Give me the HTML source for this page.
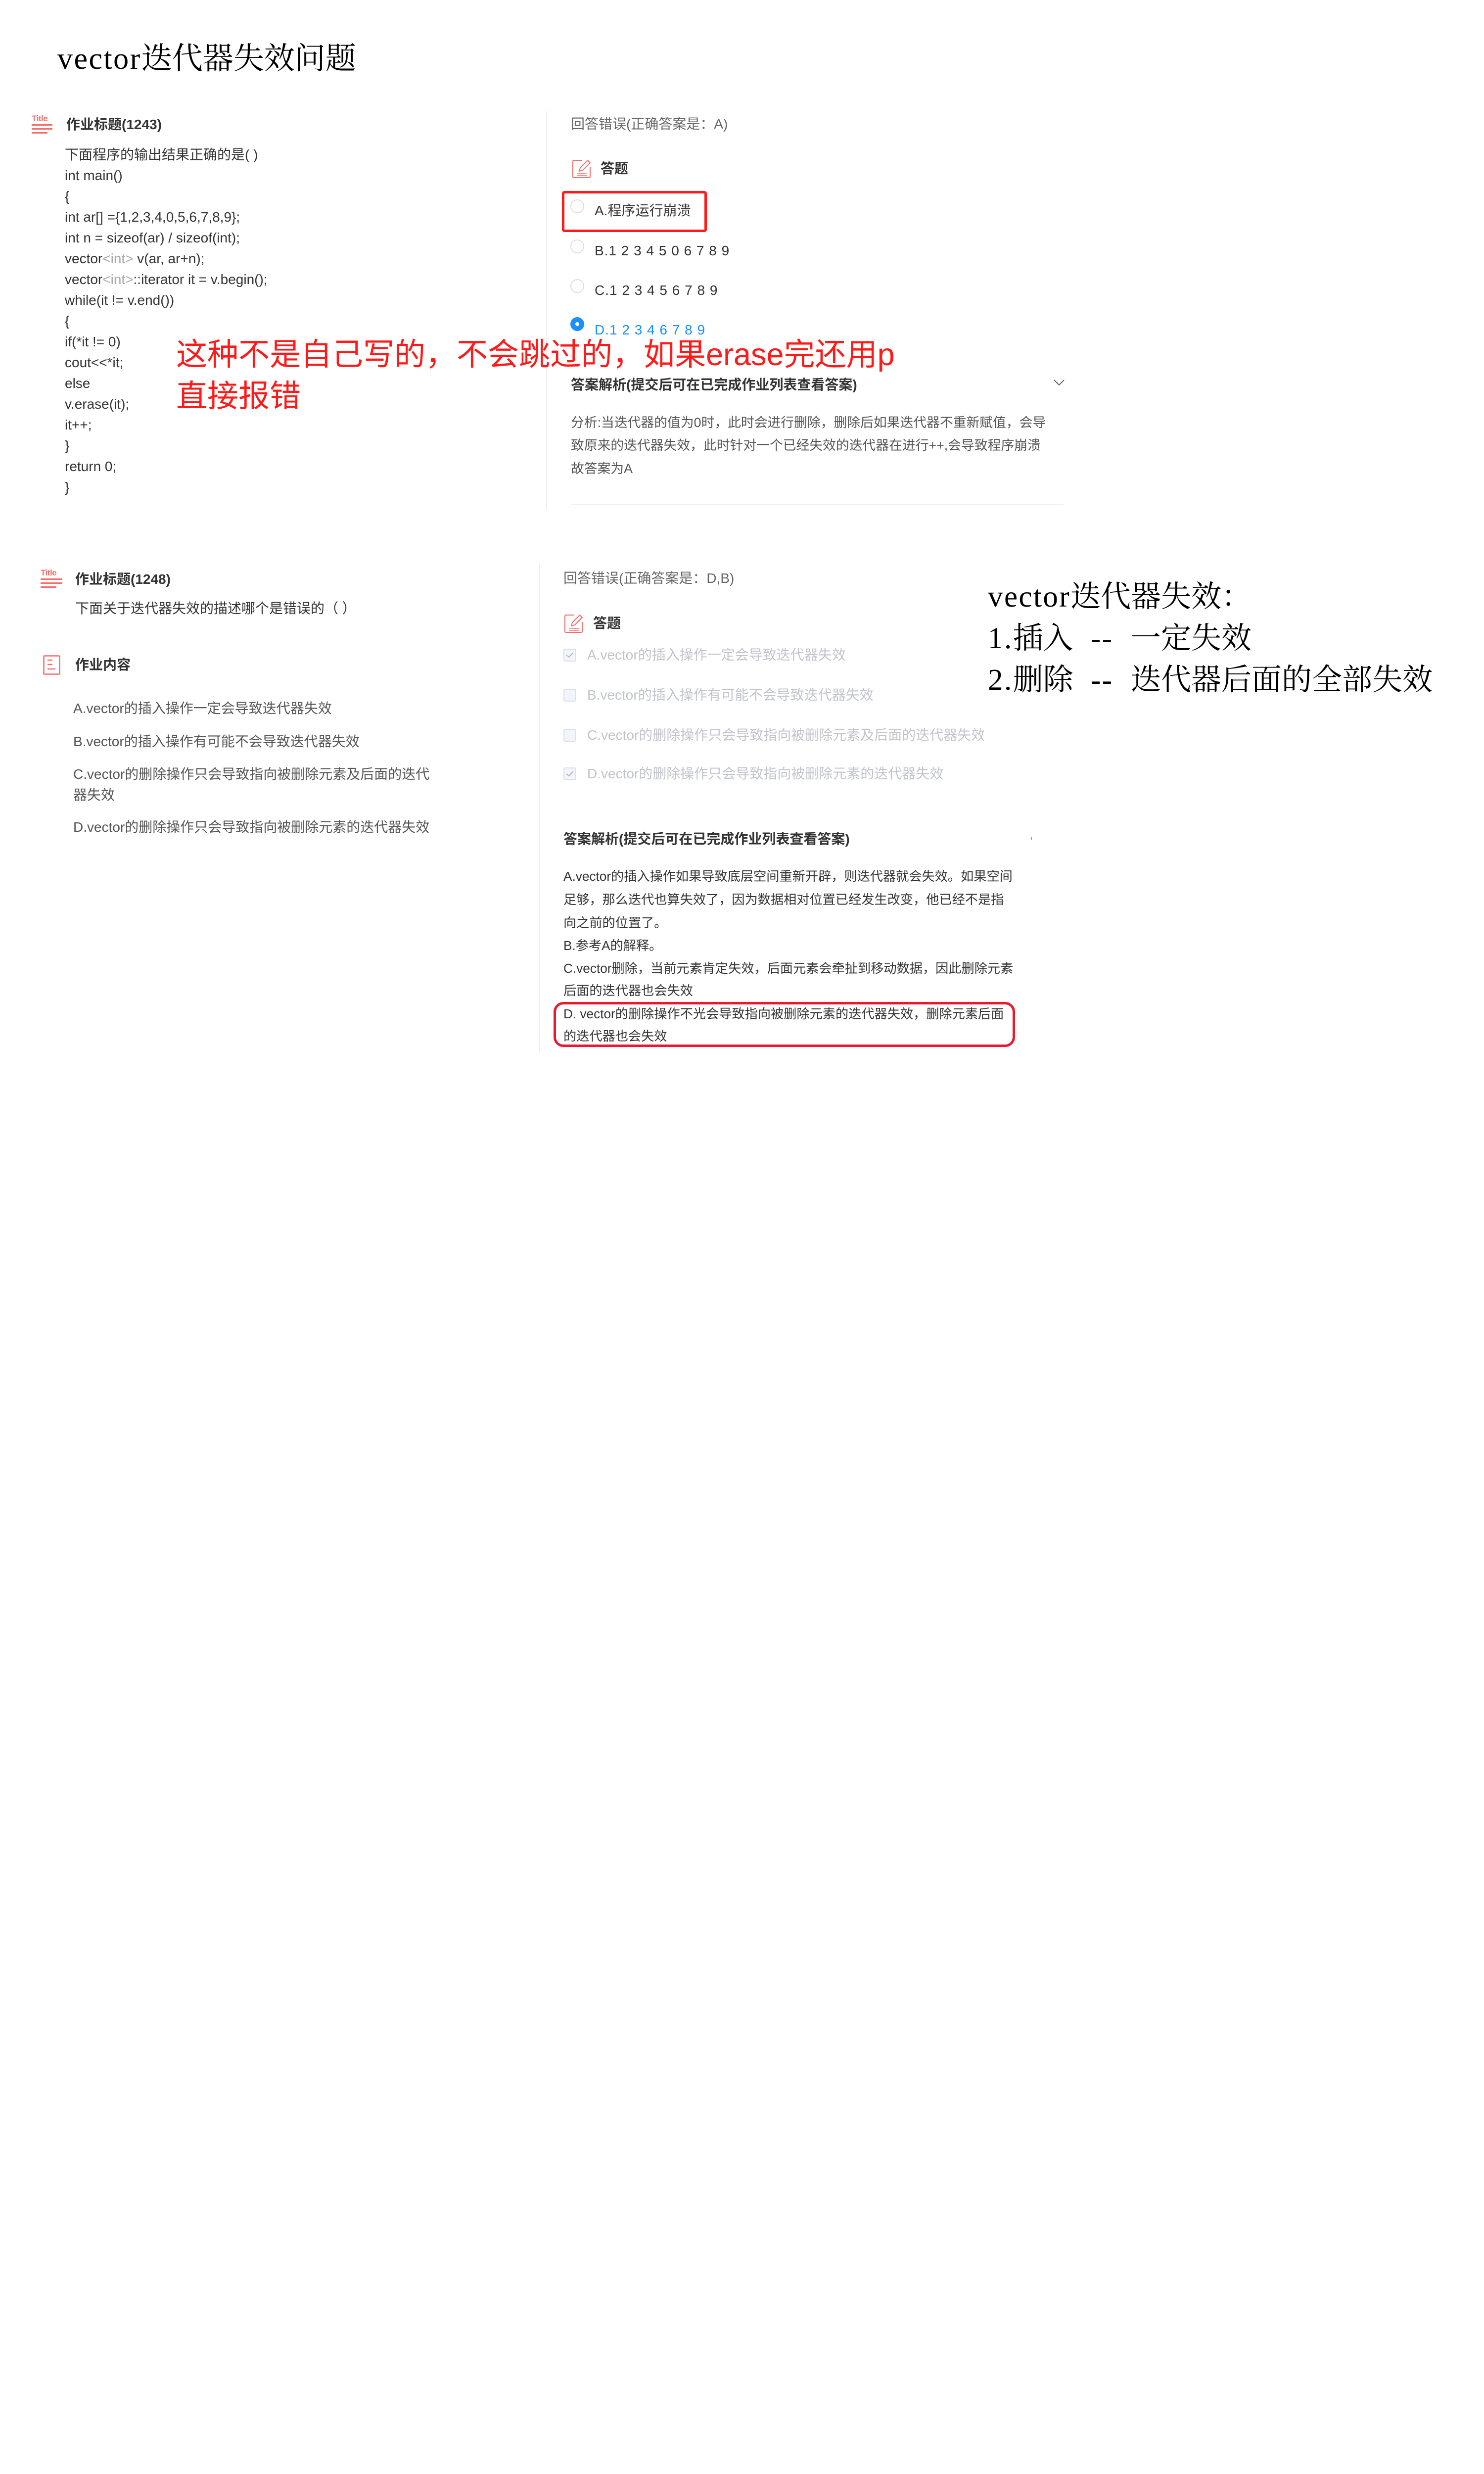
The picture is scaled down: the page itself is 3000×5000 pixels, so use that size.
<!DOCTYPE html>
<html><head><meta charset="utf-8">
<style>
*{margin:0;padding:0;box-sizing:border-box}
body{width:3000px;height:5000px;background:#fff;position:relative;overflow:hidden;font-family:"Liberation Sans","Noto Sans CJK SC",sans-serif;color:#333}
.a{position:absolute;white-space:nowrap;font-size:28px;line-height:40px}
.s{font-size:26.8px}
.s2{font-size:26.2px}
.b{font-weight:bold;color:#333}
.g{color:#666}
.lt{color:#c0c4cc}
.red{color:#ff1a1a;font-size:63px;line-height:84px}
.serif{font-family:"Noto Serif CJK SC",serif;color:#000}
.m{font-family:"Liberation Serif",serif;letter-spacing:0.04em}
.vl{position:absolute;width:2px;background:#eceef2}
.radio{position:absolute;width:28px;height:28px;border:2px solid #dcdfe6;border-radius:50%;background:#fff}
.chk{position:absolute;width:26px;height:26px;border:2px solid #dcdfe6;border-radius:4px;background:#f2f6fc}
.code .a{color:#333}
</style></head><body>

<div class="a serif" style="left:116px;top:76px;font-size:62px;line-height:74px"><span class="m">vector</span>迭代器失效问题</div>

<svg style="position:absolute;left:64px;top:230px" width="42" height="44" viewBox="0 0 42 44">
<text x="0" y="15" font-family="Liberation Sans" font-weight="bold" font-size="17" fill="#f56c6c" letter-spacing="-0.5">Title</text>
<rect x="0" y="21" width="42" height="3" fill="#f56c6c"/>
<rect x="0" y="29" width="42" height="3" fill="#f56c6c"/>
<rect x="0" y="37" width="32" height="3" fill="#f56c6c"/>
</svg>
<div class="a b" style="left:134px;top:232px">作业标题(1243)</div>
<div class="code">
<div class="a" style="left:131px;top:293px">下面程序的输出结果正确的是( )</div>
<div class="a" style="left:131px;top:335px">int main()</div>
<div class="a" style="left:131px;top:377px">{</div>
<div class="a" style="left:131px;top:419px">int ar[] ={1,2,3,4,0,5,6,7,8,9};</div>
<div class="a" style="left:131px;top:461px">int n = sizeof(ar) / sizeof(int);</div>
<div class="a" style="left:131px;top:503px">vector<span style="color:#aaa">&lt;int&gt;</span> v(ar, ar+n);</div>
<div class="a" style="left:131px;top:545px">vector<span style="color:#aaa">&lt;int&gt;</span>::iterator it = v.begin();</div>
<div class="a" style="left:131px;top:587px">while(it != v.end())</div>
<div class="a" style="left:131px;top:629px">{</div>
<div class="a" style="left:131px;top:671px">if(*it != 0)</div>
<div class="a" style="left:131px;top:713px">cout&lt;&lt;*it;</div>
<div class="a" style="left:131px;top:755px">else</div>
<div class="a" style="left:131px;top:797px">v.erase(it);</div>
<div class="a" style="left:131px;top:839px">it++;</div>
<div class="a" style="left:131px;top:881px">}</div>
<div class="a" style="left:131px;top:923px">return 0;</div>
<div class="a" style="left:131px;top:965px">}</div>
</div>

<div class="vl" style="left:1104px;top:224px;height:805px"></div>
<div class="a g" style="left:1154px;top:231px">回答错误(正确答案是：A)</div>
<svg style="position:absolute;left:1157px;top:322px" width="38" height="38" viewBox="0 0 38 38" fill="none" stroke="#f56c6c" stroke-width="2">
<path d="M20 2H3a2 2 0 0 0-2 2v31a2 2 0 0 0 2 2h31a2 2 0 0 0 2-2V16"/>
<path d="M14 24l2-7 15-15 5 5-15 15z"/>
<path d="M9 29h20M9 33h20" stroke-width="1.5"/>
</svg>
<div class="a b" style="left:1214px;top:321px">答题</div>

<div style="position:absolute;left:1136px;top:386px;width:293px;height:83px;border:5px solid #ff1a1a;border-radius:5px"></div>
<div class="radio" style="left:1153px;top:403px"></div>
<div class="a" style="left:1202px;top:406px">A.程序运行崩溃</div>
<div class="radio" style="left:1153px;top:484px"></div>
<div class="a" style="left:1202px;top:487px;letter-spacing:1px">B.1 2 3 4 5 0 6 7 8 9</div>
<div class="radio" style="left:1153px;top:564px"></div>
<div class="a" style="left:1202px;top:567px;letter-spacing:1px">C.1 2 3 4 5 6 7 8 9</div>
<div class="radio" style="left:1153px;top:641px;background:#fff;border:10px solid #1890ff"></div>
<div class="a" style="left:1202px;top:647px;color:#1890ff;letter-spacing:1px">D.1 2 3 4 6 7 8 9</div>

<div class="a b" style="left:1154px;top:758px">答案解析(提交后可在已完成作业列表查看答案)</div>
<svg style="position:absolute;left:2130px;top:766px" width="22" height="14" viewBox="0 0 22 14" fill="none" stroke="#666" stroke-width="2"><path d="M1 2l10 10 10-10"/></svg>
<div class="a s" style="left:1154px;top:834px;color:#555">分析:当迭代器的值为0时，此时会进行删除，删除后如果迭代器不重新赋值，会导</div>
<div class="a s" style="left:1154px;top:880px;color:#555">致原来的迭代器失效，此时针对一个已经失效的迭代器在进行++,会导致程序崩溃</div>
<div class="a s" style="left:1154px;top:927px;color:#555">故答案为A</div>
<div style="position:absolute;left:1154px;top:1018px;width:996px;height:2px;background:#eceef2"></div>

<div class="a red" style="left:356px;top:675px">这种不是自己写的，不会跳过的，如果erase完还用p</div>
<div class="a red" style="left:356px;top:759px">直接报错</div>

<svg style="position:absolute;left:82px;top:1148px" width="46" height="44" viewBox="0 0 46 44">
<text x="0" y="15" font-family="Liberation Sans" font-weight="bold" font-size="17" fill="#f56c6c" letter-spacing="-0.5">Title</text>
<rect x="0" y="21" width="44" height="3" fill="#f56c6c"/>
<rect x="0" y="29" width="44" height="3" fill="#f56c6c"/>
<rect x="0" y="37" width="32" height="3" fill="#f56c6c"/>
</svg>
<div class="a b" style="left:152px;top:1151px">作业标题(1248)</div>
<div class="a" style="left:152px;top:1210px">下面关于迭代器失效的描述哪个是错误的（ ）</div>
<svg style="position:absolute;left:87px;top:1324px" width="36" height="40" viewBox="0 0 36 40" fill="none" stroke="#f56c6c" stroke-width="2.5">
<rect x="1.5" y="1.5" width="32" height="37" rx="1"/>
<path d="M9 10h10M9 19h10M9 28h16"/>
</svg>
<div class="a b" style="left:152px;top:1324px">作业内容</div>
<div class="a" style="left:148px;top:1412px;color:#555">A.vector的插入操作一定会导致迭代器失效</div>
<div class="a" style="left:148px;top:1479px;color:#555">B.vector的插入操作有可能不会导致迭代器失效</div>
<div class="a" style="left:148px;top:1545px;color:#555">C.vector的删除操作只会导致指向被删除元素及后面的迭代</div>
<div class="a" style="left:148px;top:1587px;color:#555">器失效</div>
<div class="a" style="left:148px;top:1652px;color:#555">D.vector的删除操作只会导致指向被删除元素的迭代器失效</div>

<div class="vl" style="left:1090px;top:1140px;height:986px"></div>
<div class="a g" style="left:1139px;top:1149px">回答错误(正确答案是：D,B)</div>
<svg style="position:absolute;left:1141px;top:1241px" width="38" height="38" viewBox="0 0 38 38" fill="none" stroke="#f56c6c" stroke-width="2">
<path d="M20 2H3a2 2 0 0 0-2 2v31a2 2 0 0 0 2 2h31a2 2 0 0 0 2-2V16"/>
<path d="M14 24l2-7 15-15 5 5-15 15z"/>
<path d="M9 29h20M9 33h20" stroke-width="1.5"/>
</svg>
<div class="a b" style="left:1199px;top:1240px">答题</div>

<div class="chk" style="left:1139px;top:1311px"></div>
<svg style="position:absolute;left:1144px;top:1318px" width="16" height="12" viewBox="0 0 16 12" fill="none" stroke="#b0b6c0" stroke-width="2"><path d="M1 6l5 4 9-9"/></svg>
<div class="a lt" style="left:1187px;top:1304px">A.vector的插入操作一定会导致迭代器失效</div>
<div class="chk" style="left:1139px;top:1392px"></div>
<div class="a lt" style="left:1187px;top:1385px">B.vector的插入操作有可能不会导致迭代器失效</div>
<div class="chk" style="left:1139px;top:1473px"></div>
<div class="a lt" style="left:1187px;top:1466px">C.vector的删除操作只会导致指向被删除元素及后面的迭代器失效</div>
<div class="chk" style="left:1139px;top:1551px"></div>
<svg style="position:absolute;left:1144px;top:1558px" width="16" height="12" viewBox="0 0 16 12" fill="none" stroke="#b0b6c0" stroke-width="2"><path d="M1 6l5 4 9-9"/></svg>
<div class="a lt" style="left:1187px;top:1544px">D.vector的删除操作只会导致指向被删除元素的迭代器失效</div>

<div class="a b" style="left:1139px;top:1676px">答案解析(提交后可在已完成作业列表查看答案)</div>
<div style="position:absolute;left:2084px;top:1692px;width:2px;height:5px;background:#999"></div>
<div class="a s2" style="left:1139px;top:1751px">A.vector的插入操作如果导致底层空间重新开辟，则迭代器就会失效。如果空间</div>
<div class="a s2" style="left:1139px;top:1798px">足够，那么迭代也算失效了，因为数据相对位置已经发生改变，他已经不是指</div>
<div class="a s2" style="left:1139px;top:1845px">向之前的位置了。</div>
<div class="a s2" style="left:1139px;top:1891px">B.参考A的解释。</div>
<div class="a s2" style="left:1139px;top:1937px">C.vector删除，当前元素肯定失效，后面元素会牵扯到移动数据，因此删除元素</div>
<div class="a s2" style="left:1139px;top:1982px">后面的迭代器也会失效</div>
<div class="a s2" style="left:1139px;top:2029px">D. vector的删除操作不光会导致指向被删除元素的迭代器失效，删除元素后面</div>
<div class="a s2" style="left:1139px;top:2074px">的迭代器也会失效</div>
<div style="position:absolute;left:1119px;top:2025px;width:933px;height:91px;border:5px solid #e8192c;border-radius:20px"></div>

<div class="a serif" style="left:1997px;top:1166px;font-size:61px;line-height:70px"><span class="m">vector</span>迭代器失效：</div>
<div class="a serif" style="left:1997px;top:1250px;font-size:61px;line-height:70px"><span class="m">1.</span>插入<span class="m">&nbsp; --&nbsp; </span>一定失效</div>
<div class="a serif" style="left:1997px;top:1334px;font-size:61px;line-height:70px"><span class="m">2.</span>删除<span class="m">&nbsp; --&nbsp; </span>迭代器后面的全部失效</div>

</body></html>
